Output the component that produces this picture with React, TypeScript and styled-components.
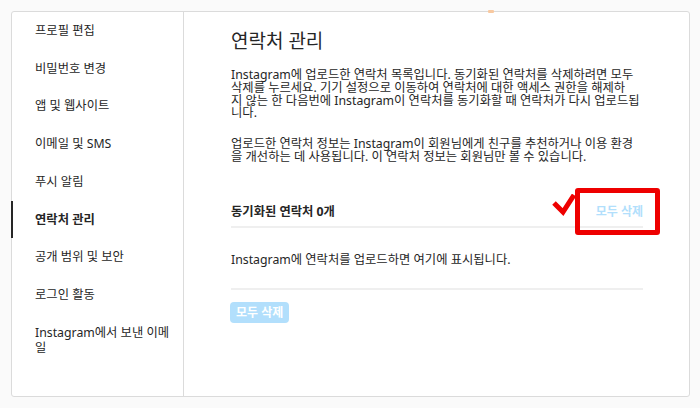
import React from "react";
import styled, { createGlobalStyle } from "styled-components";

const Global = createGlobalStyle`
  html, body { margin: 0; padding: 0; background: #fafafa; }
  body {
    font-family: "Noto Sans", "Noto Sans CJK KR", sans-serif;
    color: #262626;
  }
`;

const Page = styled.div`
  padding: 11px 10px 11px 11px;
  height: 408px;
  box-sizing: border-box;
  position: relative;
`;

const Card = styled.div`
  display: flex;
  height: 386px;
  background: #fff;
  border: 1px solid #dbdbdb;
  border-radius: 3px;
  box-sizing: border-box;
  position: relative;
`;

const Sidebar = styled.nav`
  width: 171px;
  flex-shrink: 0;
  border-right: 1px solid #dbdbdb;
  display: flex;
  flex-direction: column;
`;

const NavItem = styled.div<{ $active?: boolean }>`
  margin-left: -1px;
  padding: 11px 10px 11px 22px;
  line-height: 15.7px;
  font-size: 12.3px;
  border-left: 2px solid ${(p) => (p.$active ? "#262626" : "transparent")};
  font-weight: ${(p) => (p.$active ? 700 : 400)};
  color: #262626;
`;

const Main = styled.main`
  flex: 1;
  padding: 17px 46px 0 47px;
  display: flex;
  flex-direction: column;
  position: relative;
`;

const Title = styled.h1`
  margin: 0;
  font-size: 19px;
  font-weight: 400;
  line-height: 24px;
`;

const Para = styled.p<{ $gap: number }>`
  margin: ${(p) => p.$gap}px 0 0;
  font-size: 12.3px;
  line-height: 12.8px;
  white-space: nowrap;
`;

const SectionHead = styled.div`
  margin-top: 32px;
  height: 32px;
  display: flex;
  align-items: center;
  justify-content: space-between;
  border-bottom: 2px solid #efefef;
  box-sizing: border-box;
`;

const SectionTitle = styled.span`
  font-size: 12.3px;
  font-weight: 700;
`;

const LinkButton = styled.span`
  font-size: 12px;
  font-weight: 600;
  color: #b2dffc;
`;

const EmptyRow = styled.div`
  height: 62px;
  padding-top: 3px;
  display: flex;
  align-items: center;
  font-size: 12.3px;
  border-bottom: 2px solid #efefef;
  box-sizing: border-box;
`;

const Button = styled.button`
  margin-top: 12px;
  align-self: flex-start;
  border: none;
  border-radius: 4px;
  background: #b2dffc;
  color: #fff;
  font-family: inherit;
  font-size: 12px;
  font-weight: 700;
  height: 21px;
  padding: 0 6px;
  margin-left: -1px;
`;

const Highlight = styled.div`
  position: absolute;
  left: 575px;
  top: 188px;
  width: 85px;
  height: 47px;
  border: 5px solid #ee0000;
  border-radius: 3px;
  box-sizing: border-box;
`;

const Check = styled.svg`
  position: absolute;
  left: 552px;
  top: 194px;
`;

const Dot = styled.div`
  position: absolute;
  left: 488px;
  top: 10px;
  width: 6px;
  height: 3px;
  background: #f8c9a0;
  border-radius: 1px;
`;

const items = [
  "프로필 편집",
  "비밀번호 변경",
  "앱 및 웹사이트",
  "이메일 및 SMS",
  "푸시 알림",
  "연락처 관리",
  "공개 범위 및 보안",
  "로그인 활동",
  "Instagram에서 보낸 이메일",
];

export default function App() {
  return (
    <>
      <Global />
      <Page>
        <Card>
          <Sidebar>
            {items.map((t) => (
              <NavItem key={t} $active={t === "연락처 관리"}>
                {t === "Instagram에서 보낸 이메일" ? (
                  <>
                    Instagram에서 보낸 이메
                    <br />일
                  </>
                ) : (
                  t
                )}
              </NavItem>
            ))}
          </Sidebar>
          <Main>
            <Title>연락처 관리</Title>
            <Para $gap={16}>
              Instagram에 업로드한 연락처 목록입니다. 동기화된 연락처를 삭제하려면 모두
              <br />
              삭제를 누르세요. 기기 설정으로 이동하여 연락처에 대한 액세스 권한을 해제하
              <br />
              지 않는 한 다음번에 Instagram이 연락처를 동기화할 때 연락처가 다시 업로드됩
              <br />
              니다.
            </Para>
            <Para $gap={18}>
              업로드한 연락처 정보는 Instagram이 회원님에게 친구를 추천하거나 이용 환경
              <br />을 개선하는 데 사용됩니다. 이 연락처 정보는 회원님만 볼 수 있습니다.
            </Para>
            <SectionHead>
              <SectionTitle>동기화된 연락처 0개</SectionTitle>
              <LinkButton>모두 삭제</LinkButton>
            </SectionHead>
            <EmptyRow>Instagram에 연락처를 업로드하면 여기에 표시됩니다.</EmptyRow>
            <Button>모두 삭제</Button>
          </Main>
        </Card>
        <Dot />
        <Check width="24" height="22" viewBox="0 0 24 22">
          <path d="M2 9 L11 18 L22 1" fill="none" stroke="#ee0000" strokeWidth="5" strokeLinejoin="miter" />
        </Check>
        <Highlight />
      </Page>
    </>
  );
}
